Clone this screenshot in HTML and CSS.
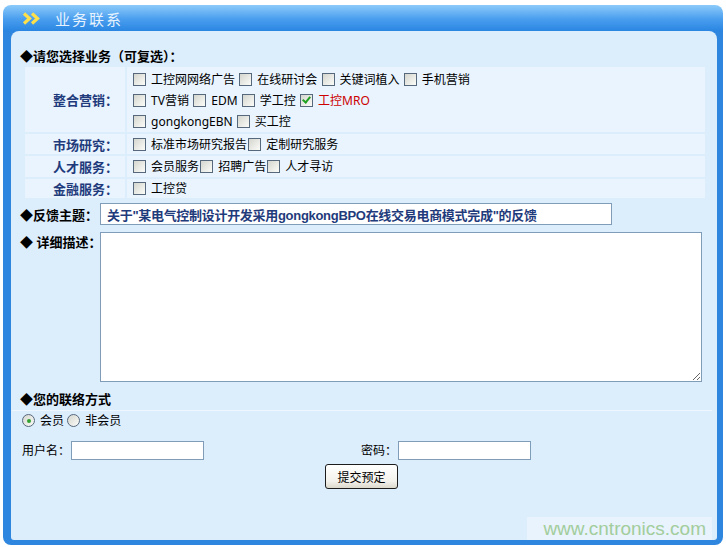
FILE: index.html
```html
<!DOCTYPE html>
<html lang="zh-CN">
<head>
    <meta charset="UTF-8">
    <title>业务联系</title>
    <link rel="stylesheet" href="styles.css">
</head>
<body>

<div class="frame">
    <div class="head">
        <svg class="chev" width="19" height="13" viewBox="0 0 19 13">
            <polyline points="2,1.5 7.5,6.5 2,11.5" fill="none" stroke="#ffe04a" stroke-width="3.2"/>
            <polyline points="10,1.5 15.5,6.5 10,11.5" fill="none" stroke="#ffe04a" stroke-width="3.2"/>
        </svg>
        <span class="head-title">业务联系</span>
    </div>

    <form class="inner">
        <div class="sect">◆请您选择业务（可复选）：</div>

        <table class="biz">
            <tr class="r1">
                <th>整合营销：</th>
                <td>
                    <input type="checkbox"> 工控网网络广告 <input type="checkbox"> 在线研讨会 <input type="checkbox"> 关键词植入 <input type="checkbox"> 手机营销<br>
                    <input type="checkbox"> TV营销 <input type="checkbox"> EDM <input type="checkbox"> 学工控 <input type="checkbox" checked> <span class="hot">工控MRO</span><br>
                    <input type="checkbox"> gongkongEBN <input type="checkbox"> 买工控
                </td>
            </tr>
            <tr class="r2">
                <th>市场研究：</th>
                <td><input type="checkbox"> 标准市场研究报告<input type="checkbox"> 定制研究服务</td>
            </tr>
            <tr class="r3">
                <th>人才服务：</th>
                <td><input type="checkbox"> 会员服务<input type="checkbox"> 招聘广告<input type="checkbox"> 人才寻访</td>
            </tr>
            <tr class="r4">
                <th>金融服务：</th>
                <td><input type="checkbox"> 工控贷</td>
            </tr>
        </table>

        <div class="row topic">
            <label class="lab">◆反馈主题：</label>
            <input type="text" class="topic-in" value="关于&quot;某电气控制设计开发采用gongkongBPO在线交易电商模式完成&quot;的反馈">
        </div>

        <div class="row desc">
            <label class="lab">◆ 详细描述：</label>
            <textarea class="desc-in"></textarea>
        </div>

        <div class="sect contact">◆您的联络方式</div>
        <div class="rule"></div>

        <div class="radios">
            <input type="radio" name="who" checked> 会员 <input type="radio" name="who"> 非会员
        </div>

        <div class="login">
            <div class="field first">用户名：<input type="text" class="small-in"></div>
            <div class="field">密码：<input type="password" class="small-in"></div>
        </div>

        <div class="submit-row">
            <button type="button" class="btn">提交预定</button>
        </div>
    </form>

    <div class="mark">www.cntronics.com</div>
</div>

</body>
</html>
```

FILE: styles.css
```css
body {
    margin: 0;
    background: #fff;
    font-family: "Noto Sans", "Noto Sans CJK SC", sans-serif;
    font-size: 12px;
    color: #000;
}

.frame {
    position: relative;
    width: 706px;
    margin: 5px 0 0 3px;
    padding: 0 6px 5px 8px;
    border-radius: 8px;
    background: linear-gradient(to bottom, #8ccbfb 0, #4a9eee 14px, #2a86e2 26px, #2e86df 27px, #2e86df 100%);
}

.head {
    height: 26px;
    display: flex;
    align-items: center;
    margin-left: -8px;
    padding-left: 19px;
}

.chev {
    display: block;
    margin-top: 1px;
}

.head-title {
    margin-left: 14px;
    font-size: 15px;
    letter-spacing: 2px;
    color: #e6f3ff;
}

.inner {
    display: block;
    height: 492px;
    margin: 0;
    padding: 17px 10px 0 9px;
    background: #dcedfc;
    border-radius: 8px 8px 3px 3px;
}

.sect {
    font-size: 13px;
    font-weight: bold;
    line-height: 16px;
    height: 16px;
}

/* business table */
.biz {
    width: 684px;
    margin: 1px 0 0 3px;
    border-spacing: 2px;
}

.biz th,
.biz td {
    background: #e9f4fe;
    padding: 0;
    box-sizing: border-box;
}

.biz th {
    width: 100px;
    padding-right: 7px;
    text-align: right;
    font-size: 13px;
    color: #1f3b7c;
    vertical-align: middle;
}

.biz td {
    padding-left: 5px;
    line-height: 21px;
    vertical-align: middle;
}

.r1 td {
    height: 65px;
    padding-top: 2px;
    vertical-align: top;
}

.r2 td { height: 20px; line-height: 19px; }
.r3 td { height: 21px; line-height: 19px; }
.r4 td { height: 19px; line-height: 18px; }

.hot {
    color: #cc0000;
}

input[type="checkbox"] {
    appearance: none;
    -webkit-appearance: none;
    position: relative;
    width: 13px;
    height: 13px;
    margin: 0 2px 0 1px;
    vertical-align: -2px;
    border: 1px solid #56687c;
    background: linear-gradient(135deg, #d6d6d0, #fbfbf8);
    box-sizing: border-box;
}

input[type="checkbox"]:checked::before {
    content: "";
    position: absolute;
    left: 3px;
    top: 0px;
    width: 3px;
    height: 6px;
    border: solid #21a121;
    border-width: 0 2px 2px 0;
    transform: rotate(40deg);
}

/* topic + description */
.row {
    display: flex;
    align-items: flex-start;
}

.lab {
    width: 80px;
    font-size: 13px;
    font-weight: bold;
    white-space: nowrap;
}

.topic {
    margin-top: 3px;
    align-items: center;
}

.topic-in {
    width: 512px;
    height: 22px;
    box-sizing: border-box;
    margin: 0;
    padding: 0 6px;
    border: 1px solid #7f9db9;
    font-family: "Liberation Sans", "Noto Sans CJK SC", sans-serif;
    font-size: 13px;
    font-weight: bold;
    letter-spacing: -0.3px;
    color: #1f3b7c;
}

.desc {
    margin-top: 7px;
}

.desc .lab {
    line-height: 20px;
}

.desc-in {
    width: 602px;
    height: 150px;
    box-sizing: border-box;
    margin: 0;
    border: 1px solid #7f9db9;
    resize: both;
}

/* contact */
.contact {
    margin-top: 9px;
}

.rule {
    height: 1px;
    margin: 3px -5px 0 -8px;
    background: #eef7ff;
}

.radios {
    height: 20px;
    line-height: 20px;
    padding-left: 2px;
}

input[type="radio"] {
    appearance: none;
    -webkit-appearance: none;
    position: relative;
    width: 13px;
    height: 13px;
    margin: 0 2px 0 0;
    vertical-align: -2px;
    border: 1px solid #56687c;
    border-radius: 50%;
    background: linear-gradient(135deg, #d6d6d0, #fbfbf8);
    box-sizing: border-box;
}

input[type="radio"]:checked::before {
    content: "";
    position: absolute;
    left: 3.5px;
    top: 3.5px;
    width: 4px;
    height: 4px;
    border-radius: 50%;
    background: #31a131;
}

.login {
    display: flex;
    margin-top: 10px;
    padding-left: 2px;
    height: 19px;
    line-height: 19px;
}

.field.first {
    width: 339px;
}

.small-in {
    width: 133px;
    height: 19px;
    box-sizing: border-box;
    margin: 0 0 0 1px;
    vertical-align: top;
    border: 1px solid #7f9db9;
}

.submit-row {
    display: flex;
    justify-content: center;
    margin-top: 4px;
    margin-right: 4px;
}

.btn {
    width: 73px;
    height: 25px;
    padding: 0;
    border: 1px solid #1c1c1c;
    border-radius: 3px;
    background: linear-gradient(to bottom, #ffffff, #f3f2ec 70%, #dcd9cc);
    font-family: inherit;
    font-size: 12px;
    color: #000;
}

.mark {
    position: absolute;
    right: 11px;
    bottom: 5px;
    width: 185px;
    height: 23px;
    background: rgba(255, 255, 255, 0.35);
    font-family: "Liberation Sans", Arial, sans-serif;
    font-size: 19px;
    line-height: 24px;
    text-align: right;
    padding-right: 6px;
    box-sizing: border-box;
    color: #a3cd9c;
}
```
